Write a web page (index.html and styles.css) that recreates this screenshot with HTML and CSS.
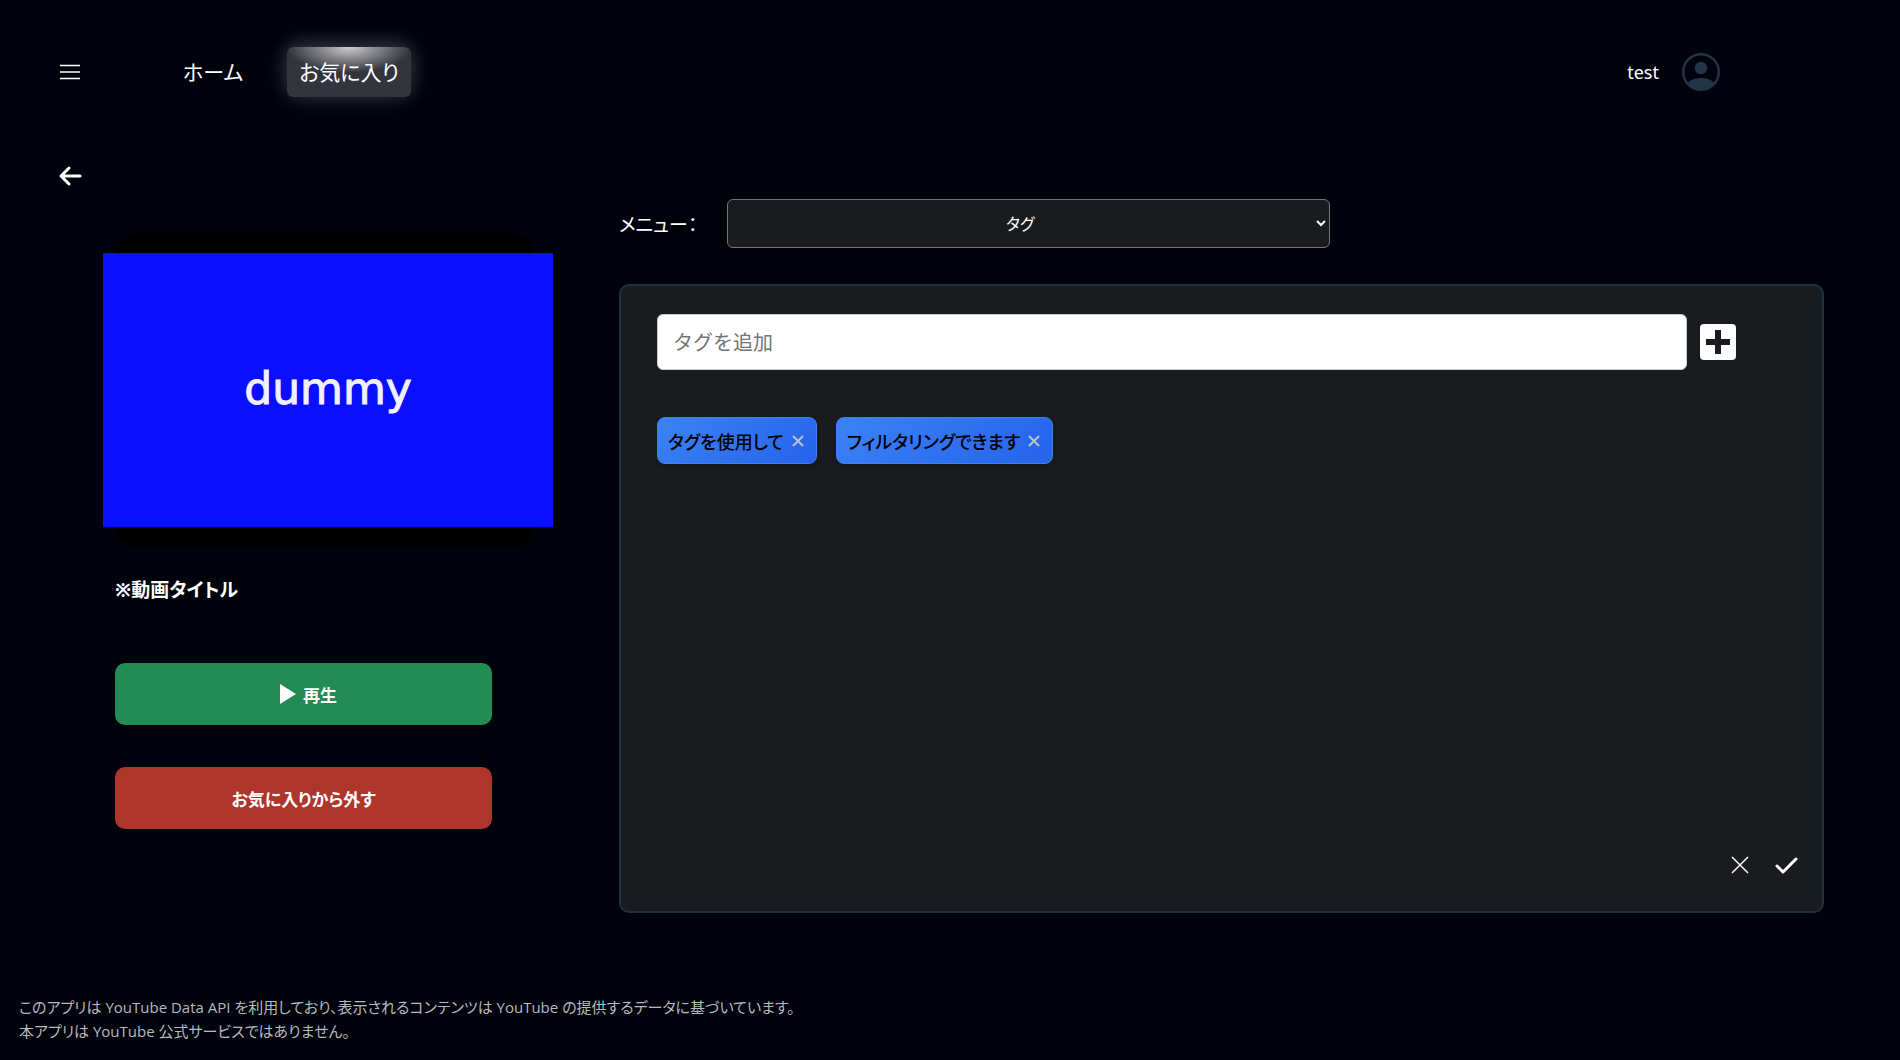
FILE: index.html
```html
<!DOCTYPE html>
<html lang="ja">
<head>
<meta charset="utf-8">
<meta name="viewport" content="width=device-width, initial-scale=1">
<title>お気に入り</title>
<link rel="stylesheet" href="styles.css">
</head>
<body>
<header class="header">
  <button class="icon-button" type="button" aria-label="メニューを開く">
    <svg width="22" height="22" viewBox="0 0 22 22" fill="none" stroke="currentColor" stroke-width="1.5"><path d="M1 4.5h20M1 11h20M1 17.5h20"/></svg>
  </button>
  <nav class="nav">
    <a class="nav-link" href="#home">ホーム</a>
    <a class="nav-link nav-link-active" href="#favorites">お気に入り</a>
  </nav>
  <div class="user">
    <span>test</span>
    <svg width="38" height="38" viewBox="0 0 38 38">
      <defs><clipPath id="face"><circle cx="19" cy="19" r="18"/></clipPath></defs>
      <circle cx="19" cy="19" r="17.8" fill="none" stroke="#223446" stroke-width="2.4"/>
      <circle cx="19" cy="15" r="6.3" fill="#223446"/>
      <path clip-path="url(#face)" d="M5 38V31C10 23 28 23 33 31V38Z" fill="#223446"/>
    </svg>
  </div>
</header>
<main class="main">
  <a class="back" href="#back" aria-label="戻る">
    <svg width="24" height="24" viewBox="0 0 24 24" fill="none" stroke="currentColor" stroke-width="3" stroke-linecap="round" stroke-linejoin="round"><path d="M22 12H3M11 4L3 12L11 20"/></svg>
  </a>
  <section class="video">
    <div class="thumb"><div class="thumb-image">dummy</div></div>
    <h1 class="video-title">※動画タイトル</h1>
    <button class="action action-play" type="button">
      <svg width="16" height="20" viewBox="0 0 16 20" fill="currentColor"><path d="M0 0L16 10L0 20Z"/></svg>再生</button>
    <button class="action action-remove" type="button">お気に入りから外す</button>
  </section>
  <section class="editor">
    <div class="menu-row">
      <label class="menu-label" for="menu">メニュー：</label>
      <select class="menu-select" id="menu"><option>タグ</option></select>
    </div>
    <div class="panel">
      <form class="tag-form">
        <input class="tag-input" type="text" placeholder="タグを追加" aria-label="タグを追加">
        <button class="add" type="button" aria-label="追加">
          <svg width="24" height="24" viewBox="0 0 24 24" fill="currentColor"><path d="M9 0h6v9h9v6h-9v9h-6v-9h-9v-6h9Z"/></svg>
        </button>
      </form>
      <ul class="tags">
        <li class="tag">タグを使用して<button class="tag-remove" type="button" aria-label="削除"><svg width="12" height="12" viewBox="0 0 12 12" stroke="currentColor" stroke-width="2"><path d="M1 1L11 11M11 1L1 11"/></svg></button></li>
        <li class="tag">フィルタリングできます<button class="tag-remove" type="button" aria-label="削除"><svg width="12" height="12" viewBox="0 0 12 12" stroke="currentColor" stroke-width="2"><path d="M1 1L11 11M11 1L1 11"/></svg></button></li>
      </ul>
      <div class="panel-actions">
        <button class="icon-button" type="button" aria-label="キャンセル"><svg width="22" height="22" viewBox="0 0 22 22" stroke="currentColor" stroke-width="1.5"><path d="M3 3L19 19M19 3L3 19"/></svg></button>
        <button class="icon-button" type="button" aria-label="保存"><svg width="24" height="24" viewBox="0 0 24 24" fill="none" stroke="currentColor" stroke-width="3" stroke-linecap="round" stroke-linejoin="round"><path d="M3 13L9 19L22 6"/></svg></button>
      </div>
    </div>
  </section>
</main>
<footer class="footer">
  <p>このアプリは YouTube Data API を利用しており、表示されるコンテンツは YouTube の提供するデータに基づいています。</p>
  <p>本アプリは YouTube 公式サービスではありません。</p>
</footer>
</body>
</html>
```
FILE: styles.css
```css
* {
  box-sizing: border-box;
}

body {
  margin: 0;
  min-height: 100vh;
  display: flex;
  flex-direction: column;
  background: #00030c;
  color: #fff;
  font-family: "Noto Sans", "Noto Sans CJK JP", sans-serif;
  font-size: 18px;
  font-feature-settings: "palt";
}

button,
input,
select {
  font: inherit;
  font-feature-settings: inherit;
}

svg {
  display: block;
}

.icon-button {
  padding: 0;
  border: 0;
  background: none;
  color: #fff;
}

.header {
  display: flex;
  align-items: center;
  height: 144px;
  padding: 0 180px 0 59px;
}

.nav {
  display: flex;
  align-items: center;
  gap: 32px;
  margin-left: 90px;
}

.nav-link {
  padding: 0 12px;
  border-radius: 6px;
  color: #fff;
  font-size: 21px;
  line-height: 50px;
  text-decoration: none;
}

.nav-link-active {
  background: radial-gradient(ellipse 62px 26px at top, #ccccce, #33353d);
  box-shadow: 0 0 24px rgba(255, 255, 255, 0.15), 0 -4px 20px rgba(255, 255, 255, 0.12);
}

.user {
  display: flex;
  align-items: center;
  gap: 23px;
  margin-left: auto;
}

.main {
  display: grid;
  grid-template-columns: 504px 1fr;
  padding: 0 76px 0 115px;
}

.back {
  grid-column: 1 / -1;
  width: 24px;
  margin: 20px 0 11px -57px;
  color: #fff;
}

.video {
  width: 377px;
  padding-top: 34px;
}

.thumb {
  width: 419px;
  padding: 20px 0;
  border-radius: 25px;
  background: #000;
}

.thumb-image {
  display: flex;
  align-items: center;
  justify-content: center;
  height: 274px;
  margin: 0 -19px 0 -12px;
  padding-bottom: 4px;
  background: #0a10ff;
  color: #f0f0ff;
  font-family: "DejaVu Sans", sans-serif;
  font-size: 44px;
  -webkit-text-stroke: 1px #f0f0ff;
}

.video-title {
  margin: 28px 0 58px;
  font-size: 19px;
  line-height: 30px;
}

.action {
  display: flex;
  align-items: center;
  justify-content: center;
  gap: 7px;
  width: 100%;
  height: 62px;
  margin-bottom: 42px;
  border: 0;
  border-radius: 10px;
  color: #fff;
  font-size: 17px;
  font-weight: 700;
}

.action-play {
  padding-left: 16px;
  background: #238c54;
}

.action-remove {
  background: #ae3529;
}

.menu-row {
  display: flex;
  align-items: center;
  margin-bottom: 36px;
}

.menu-label {
  width: 108px;
  font-size: 19px;
}

.menu-select {
  width: 50%;
  height: 49px;
  padding-right: 4px;
  border: 1px solid #767676;
  border-radius: 6px;
  background: #1a1b1e;
  color: #fff;
  font-size: 16px;
  text-align: center;
}

.panel {
  display: flex;
  flex-direction: column;
  min-height: 629px;
  padding: 28px 24px 34px 36px;
  border: 2px solid #203040;
  border-radius: 10px;
  background: #1a1b1e;
}

.tag-form {
  display: flex;
  align-items: center;
  gap: 13px;
  margin-right: 62px;
}

.tag-input {
  flex: 1;
  height: 56px;
  padding: 0 15px;
  border: 1px solid #ccc;
  border-radius: 6px;
  background: #fff;
  font-size: 20px;
  font-feature-settings: normal;
}

.tag-input::placeholder {
  color: #757575;
}

.add {
  padding: 6px;
  border: 0;
  border-radius: 4px;
  background: #fff;
  color: #1a1b1e;
}

.tags {
  display: flex;
  flex-wrap: wrap;
  gap: 19px;
  margin: 47px 0 0;
  padding: 0;
  list-style: none;
}

.tag {
  display: flex;
  align-items: center;
  gap: 8px;
  height: 47px;
  padding: 0 12px 0 10px;
  border: 1px solid #3b82f6;
  border-radius: 8px;
  background: linear-gradient(135deg, #3b82f6, #2563eb);
  box-shadow: 0 2px 4px rgba(0, 0, 0, 0.2);
  color: #000;
  font-size: 18px;
  font-weight: 500;
}

.tag-remove {
  padding: 0;
  border: 0;
  background: none;
  color: #bec2cc;
}

.panel-actions {
  display: flex;
  align-items: center;
  justify-content: flex-end;
  gap: 23px;
  margin-top: auto;
}

.footer {
  margin-top: auto;
  padding: 0 19px 17px;
  color: #b8b9bc;
  font-family: "Open Sans", "Noto Sans CJK JP", sans-serif;
  font-size: 15px;
  line-height: 24px;
}

.footer p {
  margin: 0;
}
```
